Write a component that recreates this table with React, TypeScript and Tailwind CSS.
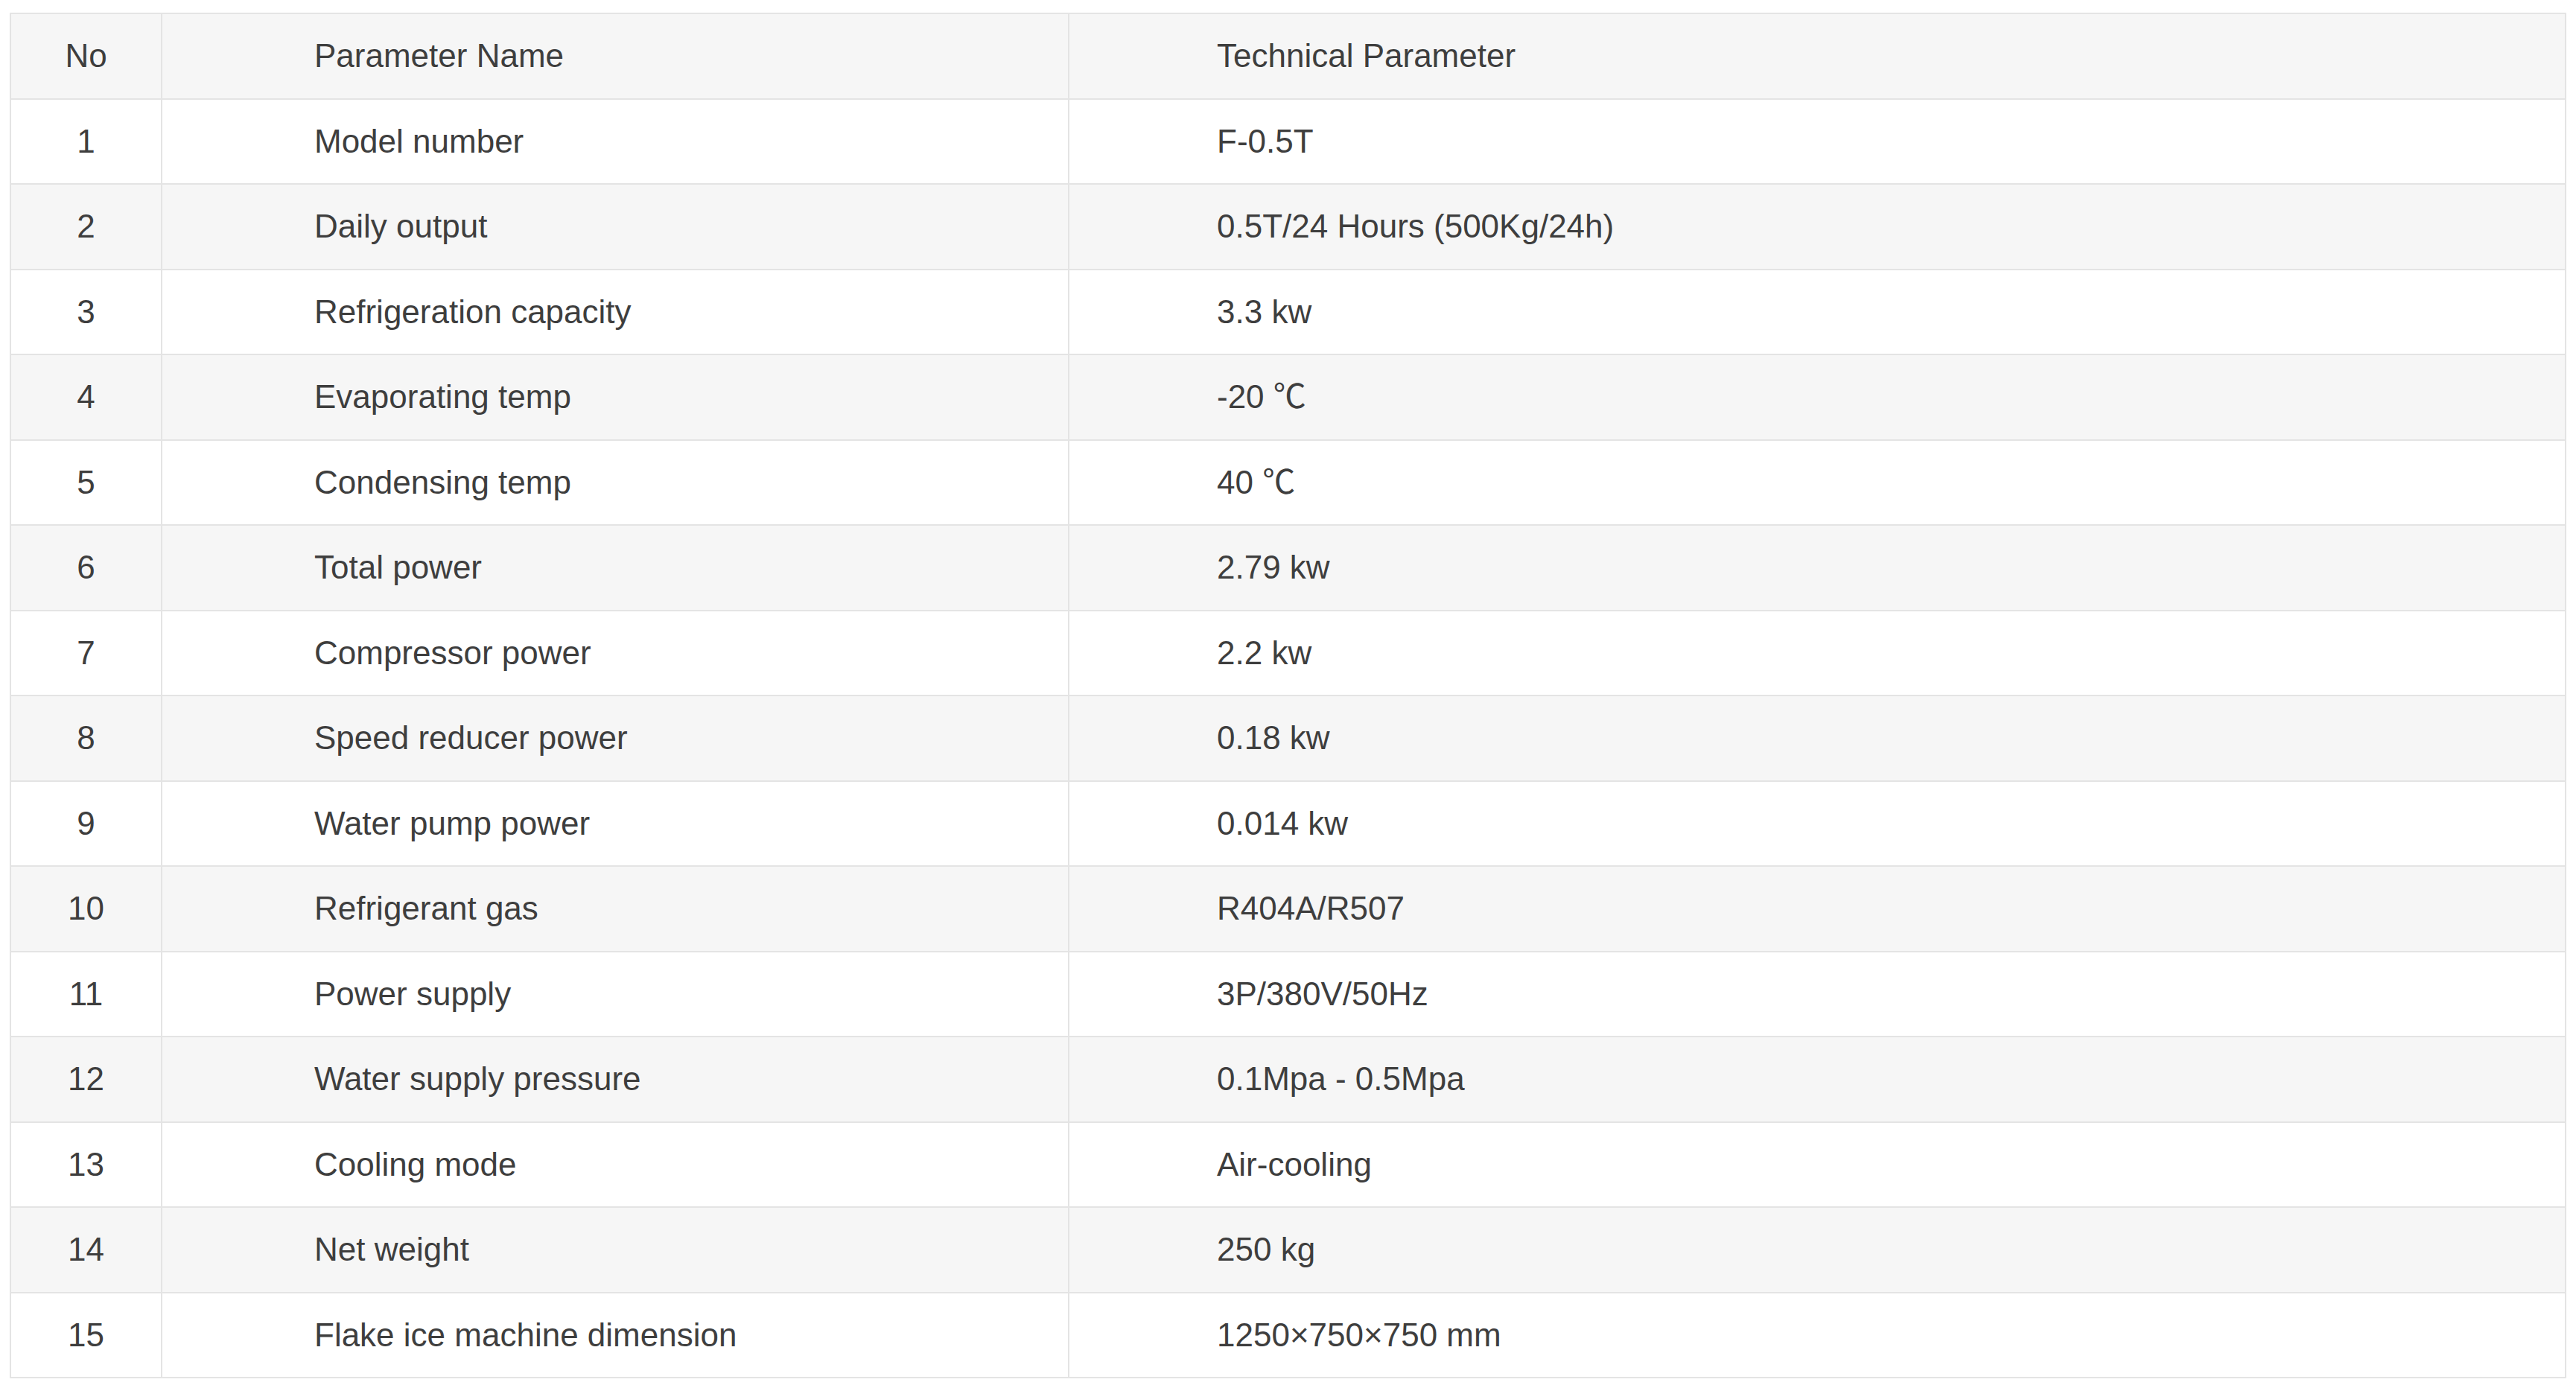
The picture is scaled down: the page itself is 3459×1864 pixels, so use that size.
const rows: [string, string][] = [
  ["Model number", "F-0.5T"],
  ["Daily output", "0.5T/24 Hours (500Kg/24h)"],
  ["Refrigeration capacity", "3.3 kw"],
  ["Evaporating temp", "-20 ℃"],
  ["Condensing temp", "40 ℃"],
  ["Total power", "2.79 kw"],
  ["Compressor power", "2.2 kw"],
  ["Speed reducer power", "0.18 kw"],
  ["Water pump power", "0.014 kw"],
  ["Refrigerant gas", "R404A/R507"],
  ["Power supply", "3P/380V/50Hz"],
  ["Water supply pressure", "0.1Mpa - 0.5Mpa"],
  ["Cooling mode", "Air-cooling"],
  ["Net weight", "250 kg"],
  ["Flake ice machine dimension", "1250×750×750 mm"],
];

export default function App() {
  return (
    <div className="w-full min-h-screen bg-white pt-[17px] pl-[13px] [font-family:'Liberation_Sans','Noto_Sans_CJK_SC',sans-serif] text-[44px] text-[#3e3e3e]">
      <table className="w-[3433px] table-fixed border-collapse border-2 border-[#e4e4e4]">
        <colgroup>
          <col className="w-[203px]" />
          <col className="w-[1218px]" />
          <col />
        </colgroup>
        <thead>
          <tr className="h-[114.5px] bg-[#f6f6f6]">
            <th className="border-2 border-[#e4e4e4] text-center font-normal">No</th>
            <th className="border-2 border-[#e4e4e4] pl-[204px] text-left font-normal">
              Parameter Name
            </th>
            <th className="border-2 border-[#e4e4e4] pl-[198px] text-left font-normal">
              Technical Parameter
            </th>
          </tr>
        </thead>
        <tbody>
          {rows.map(([name, value], i) => (
            <tr
              key={name}
              className={i % 2 === 0 ? "h-[114.5px] bg-white" : "h-[114.5px] bg-[#f6f6f6]"}
            >
              <td className="border-2 border-[#e4e4e4] text-center">{i + 1}</td>
              <td className="border-2 border-[#e4e4e4] pl-[204px]">{name}</td>
              <td className="border-2 border-[#e4e4e4] pl-[198px]">{value}</td>
            </tr>
          ))}
        </tbody>
      </table>
    </div>
  );
}
